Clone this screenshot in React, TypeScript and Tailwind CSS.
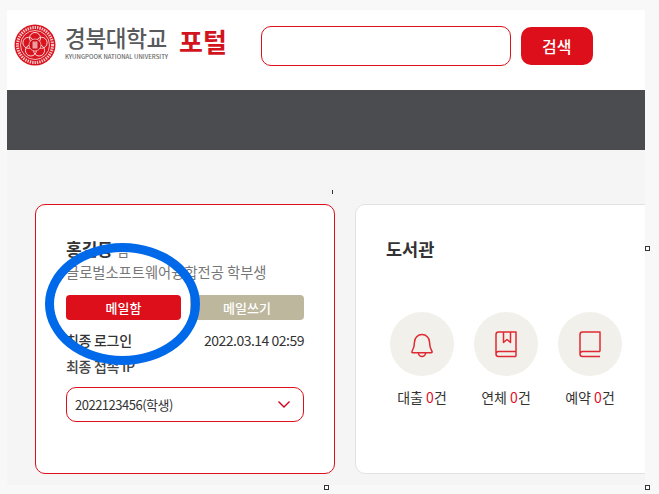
const font = { fontFamily: '"Noto Sans CJK KR", "Noto Sans", sans-serif' };

function Seal() {
  return (
    <svg width="42" height="42" viewBox="0 0 42 42" className="shrink-0">
      <circle cx="21" cy="21" r="20.5" fill="#d9141f" />
      <circle cx="21" cy="21" r="17.5" fill="none" stroke="#f7c9cb" strokeWidth="3" strokeDasharray="1.4 1" />
      <circle cx="21" cy="21" r="14.5" fill="#d9141f" stroke="#fff" strokeWidth="0.7" />
      <g fill="none" stroke="#f6d5d6" strokeWidth="1">
        <circle cx="21" cy="14" r="5.5" />
        <circle cx="14.4" cy="18.8" r="5.5" />
        <circle cx="27.6" cy="18.8" r="5.5" />
        <circle cx="16.9" cy="26.5" r="5.5" />
        <circle cx="25.1" cy="26.5" r="5.5" />
      </g>
      <circle cx="21" cy="21" r="6" fill="#c8101b" stroke="#f6d5d6" strokeWidth="0.7" />
      <rect x="18.5" y="17.5" width="5" height="7" fill="#ee9a9e" />
    </svg>
  );
}

function Handle({ className }: { className: string }) {
  return <div className={`absolute h-[5px] w-[5px] border border-[#333] bg-white ${className}`} />;
}

function Stat({ label, icon }: { label: string; icon: React.ReactNode }) {
  return (
    <div className="flex w-16 flex-col items-center">
      <div className="flex h-16 w-16 items-center justify-center rounded-full bg-[#f1f0eb]">{icon}</div>
      <div className="mt-[11px] whitespace-nowrap text-[14px] leading-[20px] text-[#333]">
        {label} <span className="text-[#e0112b]">0</span>건
      </div>
    </div>
  );
}

export default function App() {
  return (
    <div className="relative h-[494px] w-[659px] overflow-hidden bg-[#f8f8f8] pl-[7px] pt-[10px]" style={font}>
      <div className="w-[638px]">
        <header className="flex h-[80px] items-start bg-white pl-[7px] pt-[14px]">
          <Seal />
          <div className="ml-[9px] flex w-[105px] flex-col">
            <span className="whitespace-nowrap text-[22.500px] font-medium leading-[26px] tracking-[-0.3px] text-[#58595b]">경북대학교</span>
            <span className="mt-[3px] whitespace-nowrap text-[6px] font-medium leading-[7px] text-[#666]">KYUNGPOOK NATIONAL UNIVERSITY</span>
          </div>
          <span className="ml-[9px] mt-[1px] whitespace-nowrap text-[26px] font-bold leading-[32px] text-[#d2141f]">포털</span>
          <div className="ml-[34px] mt-[2px] h-10 w-[250px] rounded-[10px] border border-[#dc0f1b] bg-white" />
          <button className="ml-[10px] mt-[3px] h-[38px] w-[72px] rounded-[10px] bg-[#dc0f1b] text-[16px] font-medium text-white">검색</button>
        </header>
        <div className="h-[60px] bg-[#4b4c50]" />
        <main className="flex h-[335px] gap-5 overflow-hidden bg-[#f5f5f5] pl-7 pt-[54px]">
          <section className="h-[270px] w-[300px] shrink-0 rounded-[10px] border border-[#dc0f1b] bg-white px-[30px] pt-[31px]">
            <div className="text-[17px] font-bold leading-[26px] text-[#333]">
              홍길동 <span className="text-[14px] font-normal text-[#777]">남</span>
            </div>
            <div className="mt-[-2px] whitespace-nowrap text-[14.300px] leading-[22px] text-[#777]">글로벌소프트웨어융합전공 학부생</div>
            <div className="mt-[12px] flex gap-[9px]">
              <button className="h-[25px] w-[115px] rounded-[4px] bg-[#dc0f1b] text-[13px] font-medium text-white">메일함</button>
              <button className="h-[25px] w-[114px] rounded-[4px] bg-[#bdb79d] text-[13px] font-medium text-white">메일쓰기</button>
            </div>
            <div className="mt-[9px] flex items-center justify-between text-[14px] leading-[22px] text-[#333]">
              <span className="font-medium tracking-[-0.3px]">최종 로그인</span>
              <span className="tracking-[-0.5px]">2022.03.14 02:59</span>
            </div>
            <div className="mt-1 text-[14px] font-medium leading-[22px] tracking-[-0.3px] text-[#444]">최종 접속 IP</div>
            <div className="mt-[10px] flex h-[35px] items-center justify-between rounded-[10px] border border-[#dc0f1b] pl-2 pr-3 text-[13px] text-[#333]">
              <span className="tracking-[-0.5px]">2022123456(학생)</span>
              <svg width="14" height="9" viewBox="0 0 14 9" fill="none" stroke="#d0021b" strokeWidth="1.4">
                <path d="M1.5 1.5 7 7l5.5-5.5" />
              </svg>
            </div>
          </section>
          <section className="h-[270px] w-[400px] shrink-0 rounded-[10px] border border-[#e2e2e2] bg-white pl-[34px] pt-[31px]">
            <div className="ml-[-4px] text-[17.500px] font-bold leading-[26px] text-[#333]">도서관</div>
            <div className="mt-[50px] flex gap-5">
              <Stat
                label="대출"
                icon={
                  <svg width="26" height="28" viewBox="0 0 26 28" fill="none" stroke="#e02a33" strokeWidth="1.5" strokeLinejoin="round">
                    <path d="M5.5 12a7.5 7.5 0 0 1 15 0c0 5 1 7 2.500 9.500.4.7 0 1.200-.6 1.200H3.600c-.6 0-1-.5-.6-1.200C4.500 19 5.500 17 5.500 12Z" />
                    <path d="M9.500 23a3.500 3.500 0 0 0 7 0" />
                  </svg>
                }
              />
              <Stat
                label="연체"
                icon={
                  <svg width="24" height="28" viewBox="0 0 24 28" fill="none" stroke="#e02a33" strokeWidth="1.500" strokeLinejoin="round">
                    <path d="M22 21.500V2H4.500C3 2 2 3 2 4.500V24c0 1.500 1 2.500 2.500 2.500H22M22 21.500H4.500C3 21.500 2 22.500 2 24M22 21.500v5" />
                    <path d="M9.500 2v10.500L13 9.500l3.500 3V2" />
                  </svg>
                }
              />
              <Stat
                label="예약"
                icon={
                  <svg width="24" height="28" viewBox="0 0 24 28" fill="none" stroke="#e02a33" strokeWidth="1.500" strokeLinejoin="round">
                    <path d="M22 21.500V2H4.500C3 2 2 3 2 4.500V24c0 1.500 1 2.500 2.500 2.500H22M22 21.500H4.500C3 21.500 2 22.500 2 24" />
                  </svg>
                }
              />
            </div>
          </section>
        </main>
      </div>
      {/* annotation ellipse + selection handles sit over the page */}
      <div className="absolute left-[45px] top-[243px] h-[122px] w-[155px] rounded-[50%] border-[9px] border-[#0069ea]" />
      <div className="absolute left-[332px] top-[190px] h-[4px] w-px bg-[#333]" />
      <Handle className="left-[645px] top-[246px]" />
      <Handle className="left-[324px] top-[485px]" />
      <Handle className="left-[645px] top-[485px]" />
    </div>
  );
}
